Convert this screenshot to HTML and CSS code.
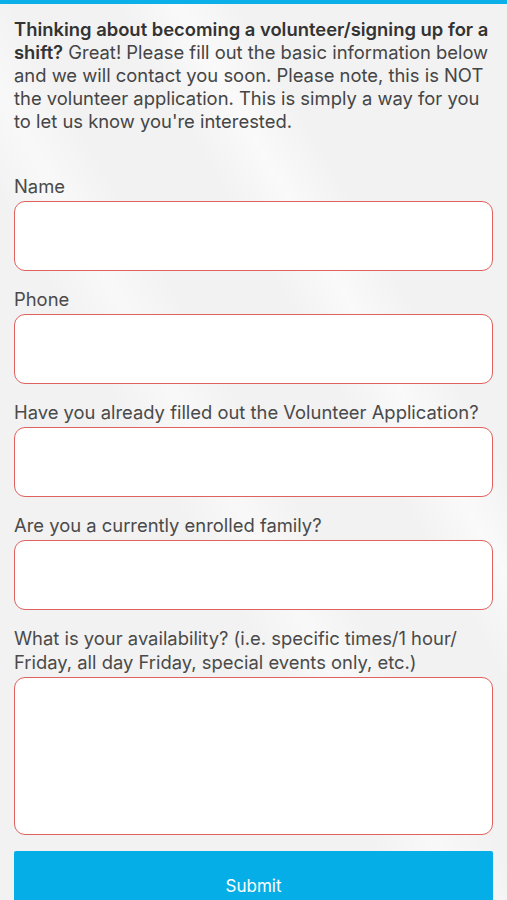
FILE: index.html
```html
<!DOCTYPE html>
<html lang="en">
<head>
    <meta charset="UTF-8">
    <meta name="viewport" content="width=device-width, initial-scale=1.0">
    <title>Volunteer Interest</title>
    <link rel="stylesheet" href="styles.css">
</head>
<body>
    <div class="top-bar"></div>

    <form class="form">
        <p class="intro"><strong>Thinking about becoming a volunteer/signing up for a shift?</strong> Great! Please fill out the basic information below and we will contact you soon. Please note, this is NOT the volunteer application. This is simply a way for you to let us know you're interested.</p>

        <label class="field">
            <span class="label">Name</span>
            <input class="input" type="text">
        </label>

        <label class="field">
            <span class="label">Phone</span>
            <input class="input" type="tel">
        </label>

        <label class="field">
            <span class="label">Have you already filled out the Volunteer Application?</span>
            <input class="input" type="text">
        </label>

        <label class="field">
            <span class="label">Are you a currently enrolled family?</span>
            <input class="input" type="text">
        </label>

        <label class="field">
            <span class="label">What is your availability? (i.e. specific times/1 hour/ Friday, all day Friday, special events only, etc.)</span>
            <textarea class="input textarea"></textarea>
        </label>

        <button class="submit" type="button">Submit</button>
    </form>
</body>
</html>
```

FILE: styles.css
```css
* {
    box-sizing: border-box;
    margin: 0;
    padding: 0;
}

body {
    background-color: #f2f2f2;
    background-image:
        linear-gradient(60deg, transparent 62%, rgba(255, 255, 255, 0.6) 68%, transparent 74%),
        linear-gradient(60deg, transparent 40%, rgba(255, 255, 255, 0.5) 46%, transparent 52%);
    color: #444;
    font-family: Inter, "Noto Sans", sans-serif;
    min-height: 900px;
    overflow: hidden;
}

.top-bar {
    height: 4px;
    background-color: #0bb0e8;
}

.form {
    display: flex;
    flex-direction: column;
    padding: 14px 14px 0;
}

.intro {
    font-size: 18.4px;
    line-height: 23px;
    color: #454545;
    margin-bottom: 41px;
}

.intro strong {
    font-weight: 600;
    color: #333;
}

.field {
    display: flex;
    flex-direction: column;
    margin-bottom: 16px;
}

.label {
    font-size: 18.4px;
    line-height: 24px;
    color: #4a4a4a;
    margin-bottom: 3px;
}

.input {
    width: 100%;
    height: 70px;
    background-color: #fff;
    border: 1.5px solid #df625e;
    border-radius: 11px;
    font-family: Inter, sans-serif;
    font-size: 16px;
    padding: 10px;
    outline: none;
}

.textarea {
    height: 158px;
    resize: none;
}

.submit {
    height: 70px;
    background-color: #05aee6;
    border: none;
    border-radius: 2px;
    color: #fff;
    font-family: Inter, sans-serif;
    font-size: 17px;
}
```
